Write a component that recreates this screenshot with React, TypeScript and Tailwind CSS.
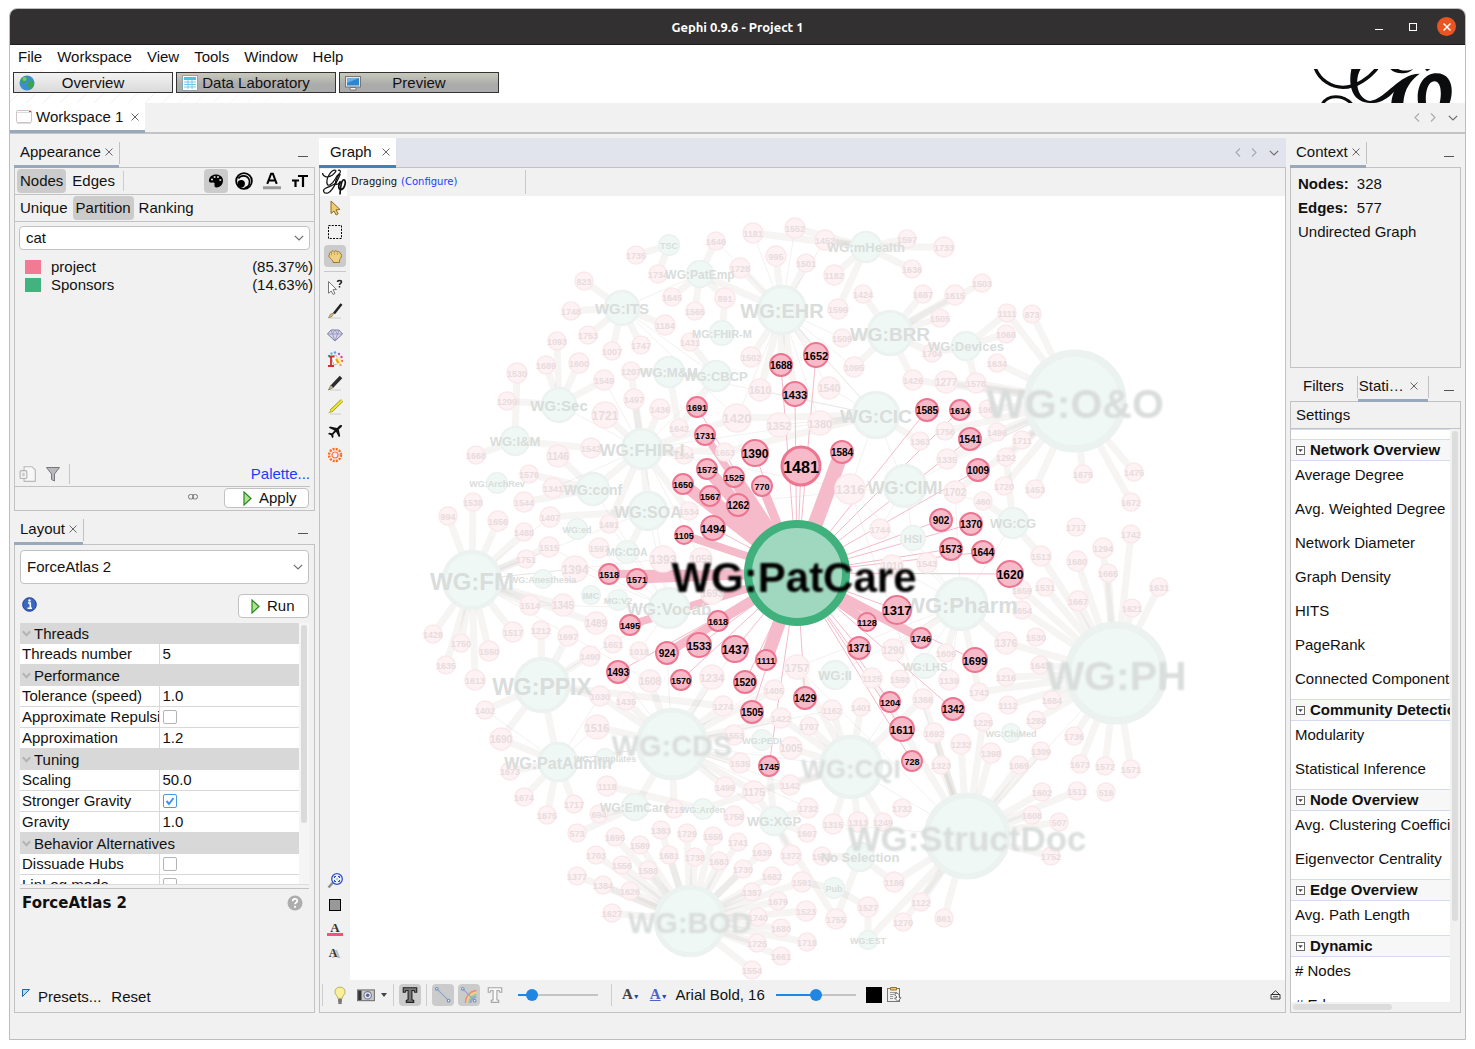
import React from "react";

/* ---------- graph data: "label x y radius", separated by commas ---------- */

type GraphNode = { label: string; x: number; y: number; r: number };

function parseNodes(text: string): GraphNode[] {
  return text
    .split(",")
    .map((part) => part.trim())
    .filter(Boolean)
    .map((part) => {
      const [label, x, y, r] = part.split(" ");
      return { label: label.replace("_", " "), x: Number(x), y: Number(y), r: r ? Number(r) : 10 };
    });
}

const PROJECTS = parseNodes(`
1181 753 233 11, 1552 795 228 11, 1452 825 240 11, 1646 716 241, 1735 636 255, 1734 658 274, 1728 740 268 11,
995 776 256 11, 1501 806 263, 1182 834 275 11, 823 584 281, 1645 672 297, 1565 695 311, 891 725 298 11, 1748 571 311,
1599 838 309 11, 1184 665 325 11, 1753 588 335, 1093 557 341, 1747 641 345, 1007 612 351, 1431 690 342, 1509 842 338,
1502 751 357 11, 1600 579 363 11, 1689 546 365, 1530 517 373 11, 1207 631 371, 1549 604 380 11, 1610 760 390 12,
1540 829 388 12, 1209 507 401, 1497 634 399 11, 1436 660 409 11, 1721 605 415 14, 1420 737 418 15, 1352 779 425 13,
1380 820 423 13, 1642 679 428, 1668 476 455, 1542 591 448 11, 1653 725 452, 1504 684 455, 1146 558 456 12, 1576 529 474,
1341 553 488 11, 1544 524 502 11, 1538 473 502, 1407 550 517 11, 994 448 516, 1656 498 521 11, 1488 524 532, 1491 609 524,
1534 689 511, 1316 850 489 16, 1515 549 547 11, 1597 599 548 11, 1751 526 559, 1393 663 559 14, 1059 701 559 12,
1394 575 569 14, 1693 712 593 12, 1514 530 605 11, 1345 563 605 12, 1489 596 623 12, 1428 433 634, 1750 461 643, 1517 513 632 11,
1212 541 630, 1697 568 636 11, 1550 489 651 11, 1651 613 644, 1490 590 656 11, 1018 639 651, 1635 446 665, 1613 475 680 11,
1608 650 681 12, 1234 712 677 13, 1757 797 667 13, 1030 600 696 11, 1435 626 701, 1405 774 690 11, 1402 485 710,
1274 723 706 11, 1422 781 718 11, 1162 832 710 11, 1516 597 727 13, 1707 809 726, 1690 501 739 12, 1553 734 735 11,
1005 791 748 12, 1673 510 771, 1535 740 763 11, 1118 607 786 11, 1499 725 787 11, 1175 754 792 12, 1142 790 785 11,
1674 524 797, 1715 674 809, 1717 574 804, 1758 734 816 11, 1732 808 808 11, 1675 547 815, 694 599 814, 1315 833 824 11,
573 577 833, 1695 615 837, 1383 661 830, 1729 687 833, 1555 713 836, 1741 738 842, 1607 807 833, 1589 640 845,
1703 596 855, 1556 622 865, 1681 669 855, 1738 695 857, 1683 719 861, 1639 762 852, 1372 791 855 11, 1548 822 856,
1588 648 870, 1730 743 869, 1682 772 876, 1377 577 876, 1384 603 885, 1626 630 891, 1591 802 882 11, 1387 752 892,
1679 778 901, 1627 612 913, 1740 758 917, 1523 806 911 11, 1755 836 919 11, 1680 781 928, 1725 757 943, 1718 807 942,
1661 781 956, 1554 752 970,
1095 854 367 11, 1426 913 380 11, 1277 946 382 12, 1578 976 383 11, 1704 932 353, 1634 997 363, 1068 1006 334,
1363 920 441, 1756 945 431, 1067 988 409, 1496 997 432, 1335 947 459 11, 1292 1006 457, 1720 1004 486, 1702 955 492 12,
460 983 501, 1744 880 529 11, 1010 892 566 12, 1543 927 563 11, 1654 1022 610, 1376 1006 643 12, 1290 893 650 12,
1609 946 653, 1125 872 678 11, 1598 900 679, 1139 949 680 11, 1216 1006 677, 1743 979 692, 1366 923 699 11,
1112 1008 705, 1401 861 707, 1225 983 722, 1692 934 733 11, 1232 961 744 11, 1398 991 753 11, 1069 1019 765, 1323 941 765,
1597 907 239, 1636 912 269, 1733 944 247 11, 1424 863 294, 1687 923 294, 1615 955 295 11, 1503 982 283, 1505 940 318,
873 1032 314, 1111 1007 313, 1711 1022 440, 1453 1035 489, 1675 1083 474, 1475 1134 472, 1672 1131 502, 1717 1076 527,
1294 1103 548 11, 1742 1131 534, 1665 1108 573, 1680 1077 561 11, 1631 1159 587, 1621 1132 608, 1513 1041 556 11, 1667 1078 601 11,
1531 1045 587, 1659 1022 590, 1530 1036 637, 1643 1040 665, 1684 1052 700, 1288 1036 720, 1309 1041 751, 1736 1074 736,
1673 1080 764, 1572 1105 766, 1571 1131 769, 1602 1042 792, 1511 1077 791, 516 1106 792, 507 1059 822, 1752 1051 856,
1186 894 882 11, 1527 868 907 11, 1122 921 902, 1270 903 922, 861 944 918, 1313 858 822 11, 1249 883 822,
1732 902 808, 1608 1032 815
`);

const SPONSORS = parseNodes(`
TSC 669 245 11, WG:PatEmp 700 274 14, WG:ITS 622 308 18, MG:FHIR-M 722 333 13, WG:EHR 782 310 25, WG:M&M 669 372 16,
WG:CBCP 716 376 16, WG:Sec 559 405 18, WG:I&M 515 441 15, WG:FHIR-I 642 449 21, WG:ArchRev 497 483 11, WG:conf 593 489 17,
WG:ed 577 529 11, WG:SOA 648 511 20, MG:CDA 627 552 12, WG:Anesthesia 543 579 10, WG:FM 472 580 30, IMC 591 595 10,
MG:V2 618 600 11, WG:Vocab 669 608 21, WG:PPIX 542 685 28, WG:II 835 675 15, WG:CDS 672 744 36, WG:PEDI 762 740 11,
WG:Templates 605 758 10, WG:PatAdmin 558 762 20, WG:EmCare 635 807 14, WG:Arden 703 809 11, WG:XGP 774 821 15,
No_Selection 860 857 15, Pub 834 888 11, WG:BOD 690 921 36, WG:mHealth 866 247 16, WG:BRR 890 333 23, WG:Devices 966 346 15,
WG:CIC 876 415 24, WG:CIMI 905 486 22, HSI 913 538 13, WG:CG 1013 523 16, WG:Pharm 961 604 27, WG:LHS 925 666 13,
WG:ChiMed 1011 733 10, WG:CQI 851 767 32, WG:O&O 1075 401 51, WG:PH 1116 673 51, WG:StructDoc 967 836 43, WG:EST 868 940 10
`);

const ACTIVE = parseNodes(`
1688 781 365 12, 1652 816 355 13, 1433 795 394 13, 1691 697 407 11, 1731 705 435 11, 1390 755 453 14, 1481 801 466 20,
1584 842 452 12, 1572 707 469 11, 1525 734 477 11, 770 762 486 11, 1650 683 484 11, 1567 710 496 11, 1262 738 505 12,
1494 713 528 13, 1105 684 535 10, 1518 609 574 11, 1571 637 579 11, 1495 630 625 11, 1618 718 621 11, 924 667 653 12,
1533 699 645 13, 1437 735 649 14, 1111 766 660 11, 1493 618 672 12, 1570 681 680 11, 1520 745 682 12, 1505 752 712 12,
1429 805 698 12, 1745 769 766 11, 1317 897 610 15, 1128 867 622 10, 1746 921 638 11, 1371 859 648 12, 1204 890 702 11,
1611 902 729 13, 728 912 761 11, 1342 953 709 12, 1699 975 660 13, 1620 1010 574 14, 1585 927 410 12, 1614 960 410 11,
1541 970 439 12, 1009 978 470 12, 902 941 520 12, 1370 971 524 12, 1573 951 549 12, 1644 983 552 12
`);

const CENTER = { x: 797, y: 573 };

/* widths of the strong links to the selected node; every other link is a hairline */
const STRONG: Record<string, number> = {
  "1584": 15, "1731": 7, "1572": 12, "1525": 14, "770": 9, "1650": 12, "1567": 10, "1262": 12, "1105": 8,
  "1518": 8, "1571": 9, "1495": 8, "924": 9, "1618": 10, "1111": 13, "1128": 9, "1746": 9,
};

/* hub -> nodes that hang on it by a wide pale link */
const HUB_LINKS: [string, string][] = [
  ["TSC", "1735 1734"],
  ["WG:PatEmp", "1646 1645 1565 891 WG:EHR"],
  ["WG:ITS", "823 1748 1753 1007 1747 1184"],
  ["MG:FHIR-M", "891"],
  ["WG:EHR", "1728 995 1501 1502 1610 1688 1433 1652"],
  ["WG:mHealth", "1452 1552 1181 1182 1599 1597 1636 1733"],
  ["WG:CBCP", "1431 1642"],
  ["WG:Sec", "1093 1689 1600 1549 1209"],
  ["WG:I&M", "1530 1668 1542"],
  ["WG:M&M", "1207 1642"],
  ["WG:FHIR-I", "1497 1436 1721 1504 1420 WG:conf WG:SOA 1534 1653 1491 1207"],
  ["WG:conf", "1576 1146 1341 1544"],
  ["WG:SOA", "1407 MG:CDA"],
  ["WG:FM", "994 1538 1656 1488 1515 1751 1428 1750 1635 1613 1550 1517 1514 1345 1489"],
  ["WG:PPIX", "1212 1697 1402 1690 1490 1030 WG:PatAdmin 1274"],
  ["WG:PatAdmin", "1690 1673 1674 1675 1717"],
  ["WG:CDS", "1608 1234 1435 1030 1516 1274 1553 1535 1499 1715 WG:EmCare 1175 1405 1422"],
  ["WG:EmCare", "573 694"],
  ["WG:Arden", "1118 1175"],
  ["WG:XGP", "1745 1732 1607 1372 1755 1175"],
  ["WG:CQI", "1162 1707 1142 1005 1401 1366 1175 1315 1422 1757 1313 1249"],
  ["WG:BOD", "1695 1589 1383 1729 1555 1741 1703 1556 1681 1738 1683 1639 1588 1730 1682 1377 1384 1626 1591 1387 1679 1627 1740 1523 1680 1725 1718 1661 1554"],
  ["WG:BRR", "1424 1687 1615 1505 1509 1095 1426 1704 1503"],
  ["WG:Devices", "1704 1578 1068 1111"],
  ["WG:CIC", "1380 1420 1653 1363"],
  ["WG:O&O", "1111 873 1634 1578 1277 1067 1496 1756 1292 1335 1720 1453 1675 1475 1672 1426 1711 1702"],
  ["WG:CG", "460 1292 1513"],
  ["WG:PH", "1294 1742 1665 1680 1631 1621 1667 1531 1659 1513 1643 1376 1216 1684 1112 1736 1673 1572 1571 1743 1288 1654"],
  ["WG:Pharm", "1376 1290 1743 1609"],
  ["WG:StructDoc", "1692 1232 1398 1323 1069 1309 1602 507 1752 1186 1122 1270 861 1225 1366 1125 1511 1608"],
  ["No Selection", "1548 1186 1755"],
  ["WG:EST", "1527 WG:StructDoc"],
  ["Pub", "1591 1527"],
];

const THIN_HUBS: [string, string[]][] = [
  ["WG:Vocab", ["1597", "1393", "1491", "1059", "1651", "1018", "WG:SOA", "1515", "1394", "1514", "WG:PPIX", "WG:conf"]],
  ["WG:EHR", ["1646", "1552", "1509", "1540", "1095", "WG:CIC", "1420", "1181", "1452", "1380"]],
  ["WG:CIC", ["1316", "1352", "1610", "1540", "WG:CIMI", "WG:EHR", "WG:M&M", "1585"]],
  ["WG:CDS", ["1757", "1493", "924", "WG:XGP", "1142", "WG:CQI", "1535", "1437", "WG:PatAdmin", "1732", "1162"]],
  ["WG:FHIR-I", ["1549", "WG:CBCP", "1316", "WG:Sec", "1393", "1059", "WG:CIC", "1341"]],
  ["WG:Pharm", ["1316", "1702", "HSI", "WG:CG", "1757", "WG:CQI", "WG:II", "1010", "1543", "1139"]],
  ["WG:CIMI", ["WG:O&O", "1744", "HSI", "1702", "460", "WG:SOA"]],
  ["WG:StructDoc", ["1757", "1316", "WG:CQI", "WG:PH", "1315"]],
  ["WG:FM", ["1394", "1393", "1608", "WG:SOA", "1407"]],
  ["WG:PatAdmin", ["1516", "1030", "1402", "WG:CDS"]],
  ["WG:ITS", ["WG:PatEmp", "WG:CBCP", "1420"]],
];

const FADED = [...PROJECTS, ...SPONSORS];
const BY_LABEL = new Map<string, GraphNode>();
[...FADED, ...ACTIVE].forEach((n) => {
  if (!BY_LABEL.has(n.label)) BY_LABEL.set(n.label, n);
});

/* some numbers occur twice, so each hub takes the nearest node that bears the label */
function nearest(label: string, from: GraphNode): GraphNode | undefined {
  return [...FADED, ...ACTIVE]
    .filter((n) => n.label === label)
    .sort((a, b) => Math.hypot(a.x - from.x, a.y - from.y) - Math.hypot(b.x - from.x, b.y - from.y))[0];
}

type Link = { x1: number; y1: number; x2: number; y2: number };

function link(a: string, b: string): Link[] {
  const p = BY_LABEL.get(a);
  const q = p && nearest(b, p);
  return p && q ? [{ x1: p.x, y1: p.y, x2: q.x, y2: q.y }] : [];
}

const splitLinks = (hub: string, list: string) => list.split(" ").flatMap((l) => link(hub, l));
const WIDE_LINKS = HUB_LINKS.flatMap(([hub, list]) => splitLinks(hub, list));
const THIN_LINKS = THIN_HUBS.flatMap(([hub, list]) => list.flatMap((l) => link(hub, l)));

function NodeLabel({ node, fill }: { node: GraphNode; fill: string }) {
  const size = Math.round(node.r * (node.r < 16 ? 0.86 : 0.81));
  return (
    <text
      x={node.x}
      y={node.y + Math.round(size * 0.42)}
      textAnchor="middle"
      fontSize={size}
      fill={fill}
      filter={size > 24 ? "url(#soft)" : undefined}
    >
      {node.label}
    </text>
  );
}

function Graph() {
  return (
    <svg
      viewBox="350 196 935 784"
      preserveAspectRatio="xMidYMid meet"
      className="h-full w-full font-['Liberation_Sans',Arial,sans-serif] font-bold"
      role="img"
      aria-label="Network graph"
    >
      <defs>
        <filter id="soft" x="-10%" y="-30%" width="120%" height="160%">
          <feGaussianBlur stdDeviation="1" />
        </filter>
      </defs>
      <g stroke="#78695a" strokeOpacity="0.065" strokeWidth="7">
        {WIDE_LINKS.map((l, i) => <line key={i} {...l} />)}
      </g>
      <g stroke="#8a7a74" strokeOpacity="0.18" strokeWidth="0.6">
        {THIN_LINKS.map((l, i) => <line key={i} {...l} />)}
      </g>
      <g stroke="#f5bbca">
        {ACTIVE.map((n) => (
          <line key={n.label} x1={CENTER.x} y1={CENTER.y} x2={n.x} y2={n.y} strokeWidth={STRONG[n.label] ?? 1} />
        ))}
      </g>
      {PROJECTS.map((n, i) => (
        <circle key={i} cx={n.x} cy={n.y} r={n.r - 1} fill="#fef2f4" stroke="#fae9eb" strokeWidth="1.5" />
      ))}
      {SPONSORS.map((n) => (
        <circle
          key={n.label}
          cx={n.x}
          cy={n.y}
          r={n.r * 0.94}
          fill="#eff8f5"
          stroke="#ebf2ef"
          strokeWidth={Math.max(1.5, n.r * 0.14)}
        />
      ))}
      {PROJECTS.map((n, i) => <NodeLabel key={i} node={n} fill="#e8dcde" />)}
      {SPONSORS.map((n) => <NodeLabel key={n.label} node={n} fill="#d9dddb" />)}
      {ACTIVE.map((n) => (
        <circle
          key={n.label}
          cx={n.x}
          cy={n.y}
          r={n.r - 1}
          fill="#f6bac9"
          stroke="#ee7590"
          strokeWidth={n.r > 16 ? 3 : 2}
        />
      ))}
      <circle cx={CENTER.x} cy={CENTER.y} r="49" fill="#a0d8bf" stroke="#40b17d" strokeWidth="8" />
      {ACTIVE.map((n) => <NodeLabel key={n.label} node={n} fill="#000" />)}
      <text x="794" y="592" textAnchor="middle" fontSize="42" fill="#000" filter="url(#soft)">WG:PatCare</text>
    </svg>
  );
}

/* ------------------------------- icons ------------------------------- */

function Svg({ size = 16, children }: { size?: number; children: React.ReactNode }) {
  return (
    <svg width={size} height={size} viewBox="0 0 16 16" fill="none" aria-hidden="true" className="shrink-0">
      {children}
    </svg>
  );
}

const Close = () => (
  <svg width="8" height="8" viewBox="0 0 8 8" stroke="#666" fill="none" aria-hidden="true"><path d="M0.5 0.5l7 7M7.5 0.5l-7 7" /></svg>
);
const ChevronDown = ({ color = "#6e6e6e" }: { color?: string }) => (
  <svg width="10" height="6" viewBox="0 0 10 6" fill="none" stroke={color} strokeWidth="1.2" aria-hidden="true"><path d="M0.8 0.8L5 5l4.2-4.2" /></svg>
);
const Chevron = ({ flip = false }: { flip?: boolean }) => (
  <svg width="6" height="9" viewBox="0 0 6 9" fill="none" stroke="#aaa" strokeWidth="1.1" aria-hidden="true">
    <path d={flip ? "M1 0.5L5 4.5 1 8.5" : "M5 0.5L1 4.5 5 8.5"} />
  </svg>
);
const GroupArrow = () => (
  <svg width="9" height="7" viewBox="0 0 9 7" fill="none" stroke="#b4b4b4" strokeWidth="2" aria-hidden="true"><path d="M0.8 1.2l3.7 4 3.7-4" /></svg>
);
const Play = () => (
  <svg width="10" height="15" viewBox="0 0 10 15" aria-hidden="true"><path d="M1 1v13l7-6.5z" fill="#b4e08c" stroke="#218a21" strokeWidth="1.2" /></svg>
);
const Globe = () => (
  <Svg><circle cx="8" cy="8" r="7.5" fill="#3b8fd0" /><path d="M2 4c2-3 6-3 7-2 0 2-2 2-2 4s-2 1-3 3c-1-1-3-2-2-5zM10 6c2-1 4 0 5 2 0 3-2 6-4 6-2-2-3-4-1-8z" fill="#3aa54b" /><circle cx="5.5" cy="4" r="2" fill="#fff" opacity=".35" /></Svg>
);
const TableIcon = () => (
  <Svg><rect x=".5" y=".5" width="15" height="15" fill="#fff" stroke="#8aa5ab" /><rect x="2" y="2" width="12" height="3" fill="#49c3ea" /><path d="M2 7h12M2 9.500h12M2 12h12M6 5v9M10 5v9" stroke="#6fcbe8" /></Svg>
);
const Monitor = () => (
  <Svg><rect x=".5" y="1.5" width="15" height="10.500" fill="#e8e8e8" stroke="#777" /><rect x="2" y="3" width="12" height="7.500" fill="#2e86d0" /><path d="M2 3h12L2 8z" fill="#69b2ea" /><path d="M5 12.5h6v2.500H5z" fill="#f4f4f4" stroke="#777" /></Svg>
);
const WorkspaceIcon = () => (
  <Svg><rect x=".5" y="1.5" width="15" height="12" rx="1" fill="#fdfdfd" stroke="#cfc5c5" /><path d="M1 3.500h14" stroke="#ddd" /><path d="M13 2.500h2" stroke="#e33" /><path d="M1 14.500h14" stroke="#ddd" /></Svg>
);
const PaletteIcon = () => (
  <Svg><path d="M8 1.500c-4 0-7 2.600-7 6 0 2.500 2 2.300 3.500 2 1.800-.3 2.300.6 2 2-.4 2 .5 3 2 3 3.600 0 6.500-3 6.500-7 0-3.500-3-6-7-6z" fill="#000" /><g fill="#cbcbcb"><circle cx="4" cy="6.500" r="1.100" /><circle cx="6.600" cy="4" r="1.100" /><circle cx="10" cy="4" r="1.100" /><circle cx="12.300" cy="7" r="1.100" /></g></Svg>
);
const SizeIcon = () => (
  <Svg size={18}>
    <circle cx="8" cy="8" r="7" stroke="#000" strokeWidth="1.600" />
    <path d="M3 5.800a5.500 5.500 0 1 1 5.500 8.500" stroke="#000" strokeWidth="1.500" />
    <circle cx="5.500" cy="10.500" r="3.300" fill="#000" />
  </Svg>
);
const LabelColorIcon = () => (
  <Svg size={18}><path d="M3.800 10.500L7.200 1.500h1.600l3.400 9M5.200 7.500h5.600" stroke="#000" strokeWidth="1.800" /><path d="M0 14h16" stroke="#999" strokeWidth="2.500" /></Svg>
);
const LabelSizeIcon = () => (
  <Svg><path d="M6 3h10M11 3v11M0 7.500h7M3.500 7.500V14" stroke="#000" strokeWidth="2.200" /></Svg>
);
const GephiMark = () => (
  <svg width="26" height="27" viewBox="0 0 26 27" fill="none" stroke="#111" aria-hidden="true">
    <path d="M1.500 4c.5 4.500 6 5 10 2 3-2.500 4.500-4.800 2.500-4.800C10 1 5 9 6 14.500c1 4 5.500.5 8.500-5 2-4 5-6 4.500-3.500-2.500 5-7 16-12 18-4.500 1-6-3-2.500-4.800 4-2 9-2.200 12-7.700" strokeWidth="1.200" />
    <path d="M17 1.500c2-1 3.500 1 1.500 3-3 5-5.500 9-3 11 2 .5 3-2 4-3.500" strokeWidth="1.100" />
    <path d="M19.500 12.500c-2 3-2.500 7-.5 8 4 1 6.500-7 4.500-9.500-2.500-1.500-4 5-4.500 14.500" strokeWidth="1.700" />
  </svg>
);
const Banner = () => (
  <svg width="140" height="34" viewBox="400 207 420 102" aria-hidden="true" className="mr-3 self-start">
    <g fill="none" stroke="#0a0c0d" strokeWidth="8">
      <path d="M407 205C420 240 455 262 490 262c40 0 78-28 102-57" strokeWidth="10" />
      <path d="M428 312c16-28 62-30 88 0" strokeWidth="9" />
    </g>
    <g fill="#0a0c0d">
      <path fillRule="evenodd" d="M515 207h28c-20 32-12 90 28 96 50-8 86-82 149-82-26 20-46 44-49 88h-36c1-14 4-24 8-34-20 22-44 36-72 34-54-2-66-52-56-102z" />
      <path d="M632 207c16 18 56 16 68 0-14 6-34 6-44 0z" />
      <path d="M736 207h16l-10 7z" />
      <path d="M715 309c-6-52 18-89 55-89 46 0 54 48 40 89h-30c8-36 2-65-16-65-20 0-28 36-25 65z" />
    </g>
  </svg>
);

const ToolArrow = () => <Svg><path d="M4 1l9 8.500-4 .3 2.200 4-2 1.200L7 11l-3 2.500z" fill="#f0cd72" stroke="#8a6a2a" /></Svg>;
const ToolRect = () => <Svg><rect x="1.500" y="1.500" width="13" height="13" stroke="#000" strokeDasharray="2 1.250" /></Svg>;
const ToolHand = () => <Svg><path d="M2.500 7c-.5-2.500 1-3.200 2-2.500 0-2 2-2.300 2.800-.8C8 2.300 10 2.600 10.300 4c1.300-.8 2.700-.2 2.700 1.300 2 .4 1.800 3.500.5 5.200L12.500 12v2.500H6V13c-1-1-2.500-2-3-3.500C1.500 9 1 7 2.500 7z" fill="#eed083" stroke="#a17a2c" /><path d="M4.500 5v2.500M7.300 4v3M10.300 4.500V7" stroke="#b58f45" strokeWidth=".7" /></Svg>;
const ToolHelp = () => <Svg><path d="M1.500 2.500l8 8-3.500.2 2 3.800-1.800 1L4.300 12l-2.800 2.200z" fill="#fff" stroke="#777" /><path d="M10.500 3c0-2 4-2 4 0 0 1.500-2 1.300-2 3M12.500 7v1.500" stroke="#222" strokeWidth="1.500" /></Svg>;
const ToolBrush = () => <Svg><path d="M3 15h11" stroke="#ccc" /><path d="M14.500 1L7 10.500" stroke="#222" strokeWidth="2.500" /><path d="M7 10l-2 3.500L1.500 15l2-4z" fill="#d6bc83" stroke="#806c42" strokeWidth=".6" /></Svg>;
const ToolGem = () => <Svg><path d="M4 3h8l3.500 4L8 14 .5 7z" fill="#d4d4ea" stroke="#7c7ca4" /><path d="M.5 7h15M4 3l1.500 4L8 14l2.500-7L12 3M5.500 7L8 3l2.500 4" stroke="#8f8fb6" strokeWidth=".8" /></Svg>;
const ToolPaint = () => (
  <Svg><g><circle cx="2" cy="5" r="1.200" fill="#4a9" /><circle cx="4.500" cy="2.500" r="1.200" fill="#4cc" /><circle cx="8" cy="1.500" r="1.200" fill="#69d" /><circle cx="12" cy="3" r="1.200" fill="#a5d" /><circle cx="14.500" cy="6" r="1.200" fill="#c4b" /><circle cx="15" cy="10" r="1.200" fill="#e66" /><circle cx="13.500" cy="14" r="1.200" fill="#e98" /></g><path d="M4 6l5-2 4 8-6 2z" fill="#fff" stroke="#bbb" /><path d="M9 7l4-1 2 6-5 2z" fill="#ffe9a0" /><path d="M9 8l2.500 4" stroke="#e9a400" strokeWidth="2.200" /><path d="M2 5.500h5.500M4 6v8M1 15h6" stroke="#d22c2c" strokeWidth="1.800" /></Svg>
);
const ToolPencil = () => <Svg><path d="M3 15h11" stroke="#ccc" /><path d="M14 2L5 11.500" stroke="#2b2b2b" strokeWidth="3.500" /><path d="M3.800 10.200l2.400 2.400L1.500 15z" fill="#d6bc83" stroke="#333" strokeWidth=".5" /></Svg>;
const ToolMarker = () => <Svg><path d="M3 15h11" stroke="#ccc" /><path d="M15 1.500L4 12" stroke="#8a8a20" strokeWidth="3.200" /><path d="M15 1.500L4 12" stroke="#f0ea25" strokeWidth="2" /><path d="M3.500 11l2 2L1 14.500z" fill="#c4bd30" /></Svg>;
const ToolPlane = () => <Svg><path d="M15 2.500c-.8-.9-2-.5-3 .5L10 5 3 3.500 1.800 4.700 7.500 7.500 5 10.200l-2.800-.5L1 10.900l3 1.400 1.300 3 1.200-1.200-.2-2.700L9 8.800l3 5.500 1.200-1.200L11.800 6.500l2.200-2c1-1 1.400-1.600 1-2z" fill="#111" /></Svg>;
const ToolSun = () => <Svg><circle cx="8" cy="8" r="6" stroke="#ff6a1a" strokeWidth="2.400" strokeDasharray="2 1.140" /><circle cx="8" cy="8" r="3" stroke="#ff6a4a" strokeWidth="1.200" /></Svg>;

const ToolZoom = () => <Svg><path d="M6 9.500L1.500 14.500" stroke="#8d8d8d" strokeWidth="2.500" /><circle cx="10" cy="6" r="5.300" fill="#eef1ff" stroke="#3150c8" strokeWidth="1.300" /><path d="M7.500 5V3.500H9M11 3.500h1.500V5M12.500 7v1.500H11M9 8.500H7.500V7" stroke="#2443b8" /><path d="M9.500 6h1" stroke="#2443b8" /></Svg>;
const ToolSquare = () => <Svg><rect x="2.500" y="2.500" width="11" height="11" fill="#999" stroke="#000" /></Svg>;

const serif = "font-['Liberation_Serif',serif] font-bold";

const Bulb = () => <Svg size={18}><path d="M8 1c-3 0-4.500 2-4.500 4.300C3.500 7.500 6 9 6 11h4c0-2 2.500-3.500 2.500-5.700C12.500 3 11 1 8 1z" fill="#f7ef9a" stroke="#b5a95a" strokeWidth=".8" /><path d="M6.300 11.500h3.400v3H6.300z" fill="#777" /><path d="M6.500 15.200h3" stroke="#333" /></Svg>;
const Camera = () => <Svg size={18}><rect x=".5" y="3.500" width="15" height="9.500" fill="#c9c9cc" stroke="#777" /><rect x="1" y="4" width="3" height="8.500" fill="#333" /><circle cx="9.500" cy="8.300" r="3.300" fill="#eee" stroke="#778" /><circle cx="9.500" cy="8.300" r="1.600" fill="#5468a8" /></Svg>;
const LetterT = ({ fill, stroke }: { fill: string; stroke: string }) => (
  <Svg size={18}><path d="M2 1.500h12v4h-1.800L11.700 4H9.700v8.300l1.600.5v1.700H4.700v-1.700l1.600-.5V4H4.300l-.5 1.500H2z" fill={fill} stroke={stroke} /></Svg>
);
const EdgeIcon = ({ rainbow = false }: { rainbow?: boolean }) => (
  <Svg size={18}>
    {rainbow && <g strokeWidth="1.600"><path d="M5 15C5 9 9 5 14.500 4" stroke="#ef8b80" /><path d="M6.500 15c0-5 3-8 8-9.500" stroke="#f3d57e" /><path d="M8 15c0-4 3-6 6.500-7.500" stroke="#8fd09a" /><path d="M9.500 15c0-3 2-4.500 5-5.500" stroke="#9a9fe0" /></g>}
    <path d="M2.500 2.500l11 11" stroke="#8ba6c8" /><circle cx="2.500" cy="2.500" r="1.200" fill="#eef" stroke="#6f93c2" /><circle cx="13" cy="13" r="1.200" fill="#eef" stroke="#6f93c2" />
  </Svg>
);
const Clipboard = () => <Svg><rect x="1.500" y="1.500" width="12" height="13" fill="#eef0f2" stroke="#777" /><path d="M4.500.5h6v2.500h-6z" fill="#e8c777" stroke="#96742c" /><path d="M4 5.500h7M4 7.500h4M4 9.500h3M4 11.500h3" stroke="#999" /><path d="M9 6.500c3-1 5 1 4 4l2 .2-3 3.800L8.500 11l2 0c0-2 0-2.500-1.500-2.500z" fill="#fff" stroke="#555" strokeWidth=".8" /></Svg>;

/* ------------------------------ controls ------------------------------ */

function IconButton({ label, active = false, children }: { label: string; active?: boolean; children: React.ReactNode }) {
  return (
    <button
      aria-label={label}
      className={`flex h-[22px] w-[22px] shrink-0 items-center justify-center rounded-sm ${active ? "bg-[#cbcbcb]" : ""}`}
    >
      {children}
    </button>
  );
}

function PanelTab({ title, active = true, divider = true, className = "gap-1 px-1.5 pr-1.5" }: { title: string; active?: boolean; divider?: boolean; className?: string }) {
  return (
    <div className="flex">
      <div
        className={`relative z-10 flex h-[30px] items-center border-b-[3px] ${active ? "border-[#9aa8bb]" : "border-transparent"} ${className}`}
      >
        <button>{title}</button>
        {active && <button aria-label={`Close ${title}`}><Close /></button>}
      </div>
      {divider && <span className="mt-1 h-[22px] w-px bg-[#c2c2c2]" />}
    </div>
  );
}

function Minimize() {
  return <button aria-label="Minimize panel" className="mt-[18px] ml-auto mr-[7px] h-px w-2.5 shrink-0 bg-[#555]" />;
}

function Picker({ label, value, className, iconClass }: { label: string; value: string; className: string; iconClass: string }) {
  return (
    <div className={`relative ${className}`}>
      <select aria-label={label} className="h-full w-full appearance-none rounded-sm border border-[#c2c2c2] bg-white px-1.5">
        <option>{value}</option>
      </select>
      <span className={`pointer-events-none absolute top-1/2 -translate-y-1/2 ${iconClass}`}><ChevronDown /></span>
    </div>
  );
}

function Slider({ label, value, track }: { label: string; value: number; track: string }) {
  return (
    <input
      type="range"
      aria-label={label}
      defaultValue={value}
      className={`h-0.5 w-20 appearance-none ${track} [&::-webkit-slider-thumb]:h-3 [&::-webkit-slider-thumb]:w-3 [&::-webkit-slider-thumb]:appearance-none [&::-webkit-slider-thumb]:rounded-full [&::-webkit-slider-thumb]:bg-[#2086e3]`}
    />
  );
}

const Divider = () => <span className="h-[22px] w-px shrink-0 bg-[#cdcdcd]" />;

/* ------------------------------- panels ------------------------------- */

function Appearance() {
  return (
    <section className="flex flex-col">
      <header className="flex h-[29px]"><PanelTab title="Appearance" /><Minimize /></header>
      <div className="flex h-[344px] flex-col border border-[#c2c2c2]">
        <div className="flex h-[27px] items-center border-b border-[#c2c2c2] pl-0.5">
          <button className="h-6 rounded-sm bg-[#cbcbcb] px-[3px]">Nodes</button>
          <button className="ml-0.5 h-6 px-1">Edges</button>
          <span className="ml-1 h-5 w-px bg-[#cdcdcd]" />
          <div className="ml-auto flex items-center gap-1 pr-0.5">
            <button aria-label="Color" className="flex h-6 w-6 items-center justify-center rounded-sm bg-[#cbcbcb]"><PaletteIcon /></button>
            <button aria-label="Size" className="flex h-6 w-6 items-center justify-center"><SizeIcon /></button>
            <button aria-label="Label color" className="flex h-6 w-6 items-center justify-center"><LabelColorIcon /></button>
            <button aria-label="Label size" className="flex h-6 w-6 items-center justify-center"><LabelSizeIcon /></button>
          </div>
        </div>
        <div className="flex h-[27px] items-center border-b border-[#c2c2c2] pl-0.5">
          <button className="h-6 px-[3px]">Unique</button>
          <button className="ml-0.5 h-6 rounded-sm bg-[#cbcbcb] px-[3px]">Partition</button>
          <button className="ml-0.5 h-6 px-[3px]">Ranking</button>
        </div>
        <Picker label="Attribute" value="cat" className="mx-1 mt-1 h-6" iconClass="right-1.5" />
        <ul className="mt-2 flex-1">
          {[
            { name: "project", share: "(85.37%)", color: "bg-[#f07b93]" },
            { name: "Sponsors", share: "(14.63%)", color: "bg-[#42b37e]" },
          ].map((row) => (
            <li key={row.name} className="flex h-[18px] items-center pl-2.5">
              <span className={`mr-2.5 h-3.5 w-4 ${row.color}`} />
              {row.name}
              <span className="ml-auto pr-px">{row.share}</span>
            </li>
          ))}
        </ul>
        <div className="mr-1 flex h-[26px] items-center border-b border-[#c2c2c2] pl-1">
          <button aria-label="Columns"><Svg size={18}><path d="M4.500 1.500h7l3 3v10h-10z" fill="#f7f7f7" stroke="#b9b9b9" /><rect x="1" y="5" width="6" height="7" rx="1" fill="#f1f1f1" stroke="#b4b4b4" /><path d="M3 7h2v3H3z" fill="#c8c8c8" /></Svg></button>
          <button aria-label="Filter" className="ml-2"><Svg><path d="M1.500 1.500h13L9.500 8v7l-3-1.500V8z" fill="#b9b9c0" stroke="#77777c" /></Svg></button>
          <span className="ml-2 h-5 w-px bg-[#c6c6c6]" />
          <a href="#palette" className="ml-auto text-[#1b3cff]">Palette...</a>
        </div>
        <div className="flex h-[23px] items-start justify-end pt-px pr-[5px]">
          <button aria-label="Link" className="mt-1.5 mr-[26px]"><svg width="10" height="6" viewBox="0 0 10 6" fill="none" stroke="#777" aria-hidden="true"><rect x=".5" y=".5" width="5" height="4.500" rx="2" /><rect x="4.500" y=".5" width="5" height="4.500" rx="2" /></svg></button>
          <button className="flex h-5 w-[85px] items-center gap-1.5 rounded-sm border border-[#c2c2c2] bg-white pl-[18px]"><Play />Apply</button>
        </div>
      </div>
    </section>
  );
}

type Row = { group?: string; name?: string; value?: string; checked?: boolean };
const ROWS: Row[] = [
  { group: "Threads" },
  { name: "Threads number", value: "5" },
  { group: "Performance" },
  { name: "Tolerance (speed)", value: "1.0" },
  { name: "Approximate Repulsion", checked: false },
  { name: "Approximation", value: "1.2" },
  { group: "Tuning" },
  { name: "Scaling", value: "50.0" },
  { name: "Stronger Gravity", checked: true },
  { name: "Gravity", value: "1.0" },
  { group: "Behavior Alternatives" },
  { name: "Dissuade Hubs", checked: false },
  { name: "LinLog mode", checked: false },
];

function PropertyBox({ label, checked }: { label: string; checked: boolean }) {
  return (
    <span className="relative flex h-[14px] w-[14px]">
      <input
        type="checkbox"
        aria-label={label}
        defaultChecked={checked}
        className="peer h-[14px] w-[14px] appearance-none rounded-[2px] border border-[#b4b4b4] bg-white checked:border-[#4a9ae8]"
      />
      <svg viewBox="0 0 14 14" className="pointer-events-none absolute inset-0 hidden peer-checked:block" fill="none" stroke="#3f94e6" strokeWidth="2" aria-hidden="true"><path d="M3.500 7l2.500 3 4.500-6" /></svg>
    </span>
  );
}

function LayoutPanel() {
  return (
    <section className="mt-1 flex min-h-0 flex-1 flex-col">
      <header className="flex h-[29px]"><PanelTab title="Layout" /><Minimize /></header>
      <div className="flex min-h-0 flex-1 flex-col border border-[#c2c2c2] px-[5px]">
        <Picker label="Layout algorithm" value="ForceAtlas 2" className="mt-[5px] h-[34px]" iconClass="right-1.5" />
        <div className="mt-2.5 flex h-6 items-center justify-between">
          <button aria-label="About this layout" className="mb-1 ml-0.5">
            <svg width="15" height="15" viewBox="0 0 15 15" aria-hidden="true"><circle cx="7.500" cy="7.500" r="6.800" fill="#3a66c4" stroke="#1e3f8e" /><path d="M6 6h2.300v5M5.500 11.300h4.500" stroke="#fff" strokeWidth="1.600" fill="none" /><circle cx="7.500" cy="3.500" r="1.200" fill="#fff" /></svg>
          </button>
          <button className="flex h-6 w-[71px] items-center gap-1.5 rounded-sm border border-[#c2c2c2] bg-white pl-3"><Play />Run</button>
        </div>
        <div className="mt-[5px] flex h-[262px] overflow-hidden border-b border-[#dcdcdc]">
          <div className="min-w-0 flex-1">
            <table className="w-full table-fixed border-separate border-spacing-0 bg-white leading-5">
              <colgroup><col className="w-1/2" /><col className="w-1/2" /></colgroup>
              <tbody>
                {ROWS.map((row) =>
                  row.group ? (
                    <tr key={row.group} className="bg-[#d8d8d8]">
                      <th colSpan={2} className="p-0 text-left font-normal">
                        <span className="flex h-[21px] items-center gap-[3px] pl-0.5"><GroupArrow />{row.group}</span>
                      </th>
                    </tr>
                  ) : (
                    <tr key={row.name}>
                      <th className="overflow-hidden border-r border-b border-[#d8d8d8] p-0 pl-0.5 text-left font-normal whitespace-nowrap">{row.name}</th>
                      <td className="border-b border-[#d8d8d8] p-0 pl-[3px]">
                        {row.value ?? <PropertyBox label={row.name ?? ""} checked={!!row.checked} />}
                      </td>
                    </tr>
                  ),
                )}
              </tbody>
            </table>
          </div>
          <div className="w-2.5 bg-[#f5f5f5] pt-0.5 pl-0.5"><div className="h-[198px] w-1.5 rounded-full bg-[#dadada]" /></div>
        </div>
        <div className="mt-[3px] flex items-center justify-between border-t border-[#c2c2c2] pt-1 pr-1.5 pl-0.5">
          <h2 className="font-['DejaVu_Sans',sans-serif] text-[15px] leading-5 font-bold">ForceAtlas 2</h2>
          <button aria-label="Help">
            <svg width="16" height="16" viewBox="0 0 16 16" fill="none" aria-hidden="true"><circle cx="8" cy="8" r="7.500" fill="#adadad" /><path d="M5.700 6.200c0-3 4.600-3 4.600-.2 0 1.500-2.300 1.600-2.300 3.200" stroke="#fff" strokeWidth="1.700" /><circle cx="8" cy="11.800" r="1.100" fill="#fff" /></svg>
          </button>
        </div>
        <div className="mt-auto flex h-[30px] items-center gap-2.5 pl-0.5">
          <button className="flex items-center gap-2">
            <svg width="8" height="8" viewBox="0 0 8 8" className="mb-2" aria-hidden="true"><path d="M.5.5h7l-7 7z" fill="#b9dcf4" stroke="#1f66a8" /></svg>
            Presets...
          </button>
          <button>Reset</button>
        </div>
      </div>
    </section>
  );
}

const TOOLS: { label: string; icon: React.ReactNode }[] = [
  { label: "Direct selection", icon: <ToolArrow /> },
  { label: "Rectangle selection", icon: <ToolRect /> },
  { label: "Drag", icon: <ToolHand /> },
  { label: "Edit", icon: <ToolHelp /> },
  { label: "Painter", icon: <ToolBrush /> },
  { label: "Sizer", icon: <ToolGem /> },
  { label: "Brush", icon: <ToolPaint /> },
  { label: "Node pencil", icon: <ToolPencil /> },
  { label: "Edge pencil", icon: <ToolMarker /> },
  { label: "Shortest path", icon: <ToolPlane /> },
  { label: "Heat map", icon: <ToolSun /> },
];

function GraphPanel() {
  return (
    <main className="flex min-w-0 flex-1 flex-col">
      <header className="flex h-[29px] shrink-0 bg-[#e1e4ec]">
        <div className="relative z-10 flex h-[30px] items-center gap-2.5 border-b-[3px] border-[#3d82c4] bg-white pr-1.5 pl-[11px]">
          <button>Graph</button>
          <button aria-label="Close Graph"><Close /></button>
        </div>
        <div className="ml-auto flex items-center gap-2.5 pr-[7px]">
          <button aria-label="Previous"><Chevron /></button>
          <button aria-label="Next"><Chevron flip /></button>
          <button aria-label="List tabs" className="ml-0.5"><ChevronDown /></button>
        </div>
      </header>
      <div className="flex min-h-0 flex-1 flex-col border border-[#c2c2c2]">
        <div className="flex h-7 shrink-0 items-center font-['DejaVu_Sans',sans-serif] text-[10px]">
          <div className="bg-white pl-px"><GephiMark /></div>
          <span className="ml-1">Dragging</span>
          <a href="#configure" className="ml-1 text-[#1b3cff]">(Configure)</a>
          <span className="ml-[68px] h-6 w-px bg-[#c9c9c9]" />
        </div>
        <div className="flex min-h-0 flex-1">
          <div className="flex w-[30px] shrink-0 flex-col items-center gap-0.5 pt-px">
            {TOOLS.slice(0, 3).map((t, i) => <IconButton key={t.label} label={t.label} active={i === 2}>{t.icon}</IconButton>)}
            <span className="my-0.5 h-px w-[22px] shrink-0 bg-[#c9c9c9]" />
            {TOOLS.slice(3).map((t) => <IconButton key={t.label} label={t.label}>{t.icon}</IconButton>)}
            <div className="mt-auto mb-4 flex flex-col gap-0.5">
              <IconButton label="Center on graph"><ToolZoom /></IconButton>
              <IconButton label="Reset colors"><ToolSquare /></IconButton>
              <IconButton label="Reset label colors"><span className={`${serif} w-4 border-b-[3px] border-[#ff4d80] text-center text-[13px] leading-[11px] text-[#333]`}>A</span></IconButton>
              <IconButton label="Reset label visibility"><span className={`${serif} pr-1 text-[12px] leading-3 text-[#333] [text-shadow:3px_1px_0_#bbb]`}>A</span></IconButton>
            </div>
          </div>
          <div className="min-w-0 flex-1 bg-white"><Graph /></div>
        </div>
        <div className="flex h-8 shrink-0 items-center pb-0.5 pl-0.5">
          <Divider />
          <button aria-label="Background color" className="ml-2"><Bulb /></button>
          <button aria-label="Screenshot" className="ml-2 flex items-center gap-1.5">
            <Camera />
            <svg width="6" height="4" viewBox="0 0 6 4" aria-hidden="true"><path d="M0 0h6L3 4z" fill="#444" /></svg>
          </button>
          <span className="ml-1.5 flex"><Divider /></span>
          <span className="ml-[5px] flex"><IconButton label="Show node labels" active><LetterT fill="#777" stroke="#222" /></IconButton></span>
          <span className="mr-[5px] ml-[5px] flex"><Divider /></span>
          <IconButton label="Show edges" active><EdgeIcon /></IconButton>
          <span className="ml-1 flex"><IconButton label="Edges have source node color" active><EdgeIcon rainbow /></IconButton></span>
          <span className="mr-3 ml-1 flex"><IconButton label="Show edge labels"><LetterT fill="#fafafa" stroke="#a5a5a5" /></IconButton></span>
          <Slider label="Edge weight scale" value={12} track="bg-[linear-gradient(to_right,#2086e3_15%,#c4c4c4_15%)]" />
          <span className="mr-2.5 ml-[13px] flex"><Divider /></span>
          <button aria-label="Label size mode" className={`${serif} text-[15px] text-[#444]`}>A<span className="text-[7px] text-[#2443b8]">▼</span></button>
          <button aria-label="Label color mode" className={`${serif} ml-2.5 text-[15px] text-[#4a66cc] underline`}>A<span className="inline-block text-[7px] text-[#2443b8]">▼</span></button>
          <button className="mr-[11px] ml-2">Arial Bold, 16</button>
          <Slider label="Label size" value={50} track="bg-[linear-gradient(to_right,#2086e3_50%,#c4c4c4_50%)]" />
          <button aria-label="Label color" className="mr-1 ml-2.5 h-4 w-4 bg-black" />
          <button aria-label="Attributes"><Clipboard /></button>
          <button aria-label="Expand settings" className="mr-1 ml-auto">
            <svg width="11" height="10" viewBox="0 0 11 10" fill="none" stroke="#333" aria-hidden="true"><path d="M1.500 4.500L5.500.800l4 3.700M1 4.500h9v4.500H1zM3 6.800h5" /></svg>
          </button>
        </div>
      </div>
    </main>
  );
}

const STATS: { title: string; items: string[] }[] = [
  { title: "Network Overview", items: ["Average Degree", "Avg. Weighted Degree", "Network Diameter", "Graph Density", "HITS", "PageRank", "Connected Components"] },
  { title: "Community Detection", items: ["Modularity", "Statistical Inference"] },
  { title: "Node Overview", items: ["Avg. Clustering Coefficient", "Eigenvector Centrality"] },
  { title: "Edge Overview", items: ["Avg. Path Length"] },
  { title: "Dynamic", items: ["# Nodes", "# Edges"] },
];

function RightColumn() {
  return (
    <aside className="flex w-[171px] shrink-0 flex-col">
      <header className="flex h-[29px] shrink-0"><PanelTab title="Context" /><Minimize /></header>
      <dl className="grid h-[201px] shrink-0 auto-rows-[24px] grid-cols-[auto_1fr] content-start items-center gap-x-2 border border-[#c2c2c2] px-[7px] pt-1">
        <dt className="font-bold">Nodes:</dt><dd>328</dd>
        <dt className="font-bold">Edges:</dt><dd>577</dd>
        <dt className="col-span-2">Undirected Graph</dt>
      </dl>
      <header className="mt-1 flex h-[29px] shrink-0">
        <PanelTab title="Filters" active={false} className="px-[13px]" />
        <PanelTab title="Stati…" className="gap-1.5 pr-2.5 pl-px" />
        <Minimize />
      </header>
      <div className="flex min-h-0 flex-1 flex-col border border-[#c2c2c2]">
        <div className="flex h-[27px] shrink-0 items-center border-b border-[#c2c2c2] pl-[5px]">Settings</div>
        <div className="flex min-h-0 flex-1">
          <div className="min-w-0 flex-1 overflow-hidden border-t border-[#d5daf3] bg-white pt-[9px]">
            {STATS.map((group) => (
              <section key={group.title}>
                <h3 className="flex h-[22px] items-center gap-[5px] border-y border-[#d5daf3] bg-[#f7f7f7] pl-[5px] font-bold whitespace-nowrap">
                  <button aria-label={`Collapse ${group.title}`} className="shrink-0">
                    <svg width="9" height="9" viewBox="0 0 9 9" fill="none" aria-hidden="true"><rect x=".5" y=".5" width="8" height="8" fill="#fff" stroke="#666" /><path d="M2.200 3.200h4.600L4.500 6z" fill="#444" /></svg>
                  </button>
                  {group.title}
                </h3>
                <ul className="pl-1">
                  {group.items.map((item) => <li key={item} className="h-[34px] pt-1 leading-5 whitespace-nowrap">{item}</li>)}
                </ul>
              </section>
            ))}
          </div>
          <div className="w-2.5 pt-0.5 pl-0.5"><div className="h-[490px] w-1.5 rounded-full bg-[#dcdcdc]" /></div>
        </div>
        <div className="flex h-2.5 shrink-0 items-center pl-0.5"><div className="h-1.5 w-[99px] rounded-full bg-[#dcdcdc]" /></div>
      </div>
    </aside>
  );
}

export default function App() {
  return (
    <div className="flex h-screen flex-col bg-white px-[9px] pt-2 pb-[9px] font-['Liberation_Sans',Arial,sans-serif] text-[15px] leading-5 text-[#111]">
      <div className="flex min-h-0 flex-1 flex-col overflow-hidden rounded-t-lg border border-[#bdbdbd] bg-[#f1f1f1]">
        <div className="grid h-9 shrink-0 grid-cols-[1fr_auto_1fr] items-center border-b border-[#1f1e1e] bg-[#323031] text-white">
          <h1 className="col-start-2 font-['Ubuntu','Noto_Sans',sans-serif] text-[13px] font-bold">Gephi 0.9.6 - Project 1</h1>
          <div className="flex items-center justify-end pr-[9px]">
            <button aria-label="Minimize" className="mt-1.5 h-px w-2 bg-white" />
            <button aria-label="Maximize" className="ml-[26px] h-2 w-2 border border-white" />
            <button aria-label="Close" className="ml-5 flex h-[19px] w-[19px] items-center justify-center rounded-full bg-[#e95420]">
              <svg width="8" height="8" viewBox="0 0 8 8" stroke="#fff" strokeWidth="1.500" aria-hidden="true"><path d="M.5.5l7 7M7.500.500l-7 7" /></svg>
            </button>
          </div>
        </div>
        <nav className="flex h-6 shrink-0 items-center gap-[15px] bg-white pl-2">
          {["File", "Workspace", "View", "Tools", "Window", "Help"].map((item) => <button key={item}>{item}</button>)}
        </nav>
        <div className="relative flex h-[34px] shrink-0 items-start justify-between bg-white">
          <div className="absolute inset-y-0 left-0 w-80 bg-[repeating-linear-gradient(135deg,#fff_0px,#fff_11px,#cfcfcf_12px)] [mask-image:linear-gradient(to_right,#000,transparent)]" />
          <div className="relative flex gap-[3px] pt-[3px] pl-[3px]">
            {[
              { name: "Overview", icon: <Globe />, look: "bg-linear-to-b from-[#f2f2f2] to-[#dadada]" },
              { name: "Data Laboratory", icon: <TableIcon />, look: "bg-linear-to-b from-[#c9cabc] to-[#ababab] to-60%" },
              { name: "Preview", icon: <Monitor />, look: "bg-linear-to-b from-[#c9cabc] to-[#ababab] to-60%" },
            ].map((b) => (
              <button key={b.name} className={`flex h-[21px] w-40 items-center border border-[#333] px-[5px] ${b.look}`}>
                {b.icon}
                <span className="flex-1 pr-4 text-center">{b.name}</span>
              </button>
            ))}
          </div>
          <Banner />
        </div>
        <div className="flex h-[31px] shrink-0 border-b-2 border-[#c4c4c4]">
          <div className="relative z-10 flex h-[30px] items-center border-b-[3px] border-[#9aa8bb] bg-white px-1.5">
            <WorkspaceIcon />
            <button className="ml-1">Workspace 1</button>
            <button aria-label="Close Workspace 1" className="ml-2"><Close /></button>
          </div>
          <div className="ml-auto flex items-center gap-2.5 pr-[7px]">
            <button aria-label="Previous"><Chevron /></button>
            <button aria-label="Next"><Chevron flip /></button>
            <button aria-label="List tabs" className="ml-0.5"><ChevronDown /></button>
          </div>
        </div>
        <div className="flex min-h-0 flex-1 gap-1 px-1 pt-1">
          <div className="flex w-[301px] shrink-0 flex-col"><Appearance /><LayoutPanel /></div>
          <GraphPanel />
          <RightColumn />
        </div>
        <footer className="h-[26px] shrink-0" />
      </div>
    </div>
  );
}
